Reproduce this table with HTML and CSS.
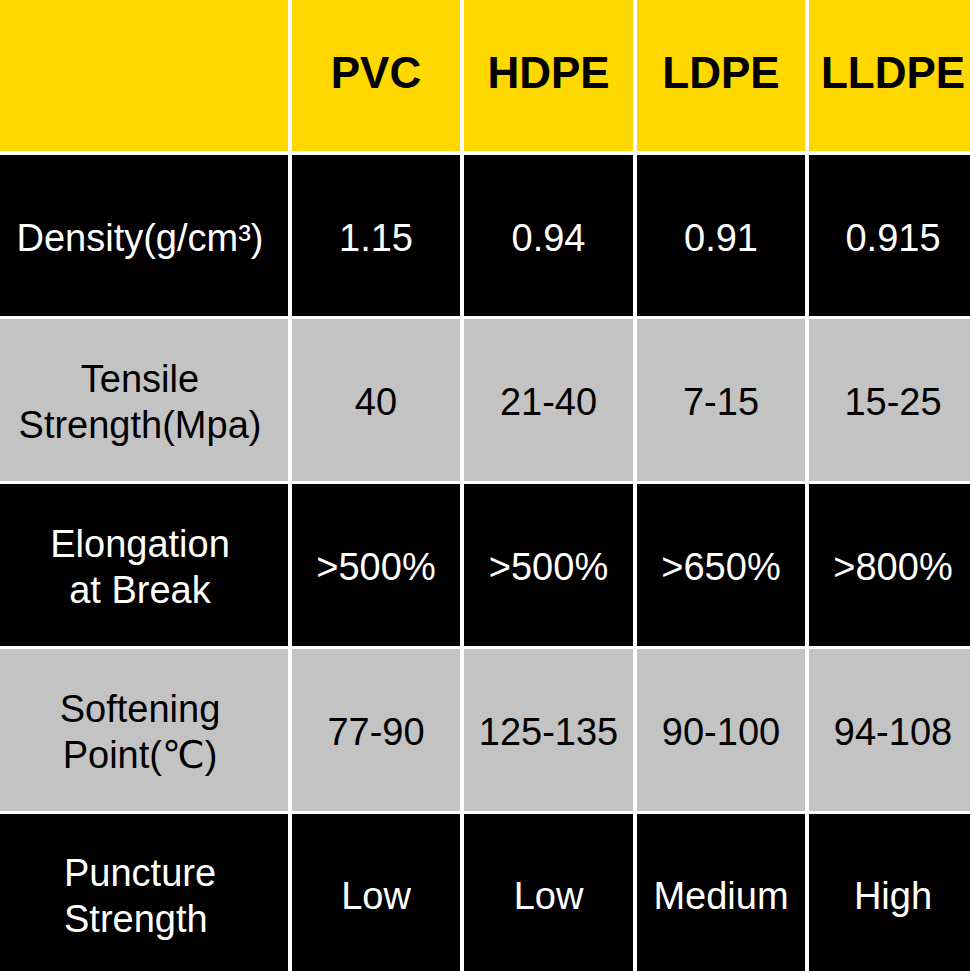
FILE: index.html
```html
<!DOCTYPE html>
<html lang="en">
<head>
<meta charset="utf-8">
<title>PVC vs PE comparison</title>
<link rel="stylesheet" href="styles.css">
</head>
<body>
<div class="table">
  <div class="cell head corner"></div>
  <div class="cell head">PVC</div>
  <div class="cell head">HDPE</div>
  <div class="cell head">LDPE</div>
  <div class="cell head">LLDPE</div>

  <div class="cell dark label">Density(g/cm³)</div>
  <div class="cell dark">1.15</div>
  <div class="cell dark">0.94</div>
  <div class="cell dark">0.91</div>
  <div class="cell dark">0.915</div>

  <div class="cell light label">Tensile<br>Strength(Mpa)</div>
  <div class="cell light">40</div>
  <div class="cell light">21-40</div>
  <div class="cell light">7-15</div>
  <div class="cell light">15-25</div>

  <div class="cell dark label">Elongation<br>at Break</div>
  <div class="cell dark">&gt;500%</div>
  <div class="cell dark">&gt;500%</div>
  <div class="cell dark">&gt;650%</div>
  <div class="cell dark">&gt;800%</div>

  <div class="cell light label">Softening<br>Point(℃)</div>
  <div class="cell light">77-90</div>
  <div class="cell light">125-135</div>
  <div class="cell light">90-100</div>
  <div class="cell light">94-108</div>

  <div class="cell dark label label-left">Puncture<br>Strength</div>
  <div class="cell dark">Low</div>
  <div class="cell dark">Low</div>
  <div class="cell dark">Medium</div>
  <div class="cell dark">High</div>
</div>
</body>
</html>
```
FILE: styles.css
```css
html, body {
  margin: 0;
  padding: 0;
  background: #ffffff;
  overflow: hidden;
}

.table {
  display: grid;
  width: 977px;
  grid-template-columns: 288px 168px 169px 168px 168px;
  grid-template-rows: 152px 161px 162px 162px 162px 160px;
  column-gap: 4px;
  row-gap: 3px;
  font-family: "Liberation Sans", Arial, "DejaVu Sans", sans-serif;
}

.cell {
  display: flex;
  align-items: center;
  justify-content: center;
  text-align: center;
  font-size: 38px;
  line-height: 46px;
  padding-top: 4px;
}

.head {
  background: #ffd800;
  color: #000000;
  font-weight: bold;
  font-size: 44px;
  padding-top: 0;
  padding-bottom: 5px;
  margin-bottom: 1px;
}

.dark {
  background: #000000;
  color: #ffffff;
}

.light {
  background: #c3c3c3;
  color: #000000;
}

.label {
  padding-right: 8px;
}

.label-left {
  justify-content: flex-start;
  text-align: left;
  padding-left: 64px;
  padding-right: 0;
}
```
